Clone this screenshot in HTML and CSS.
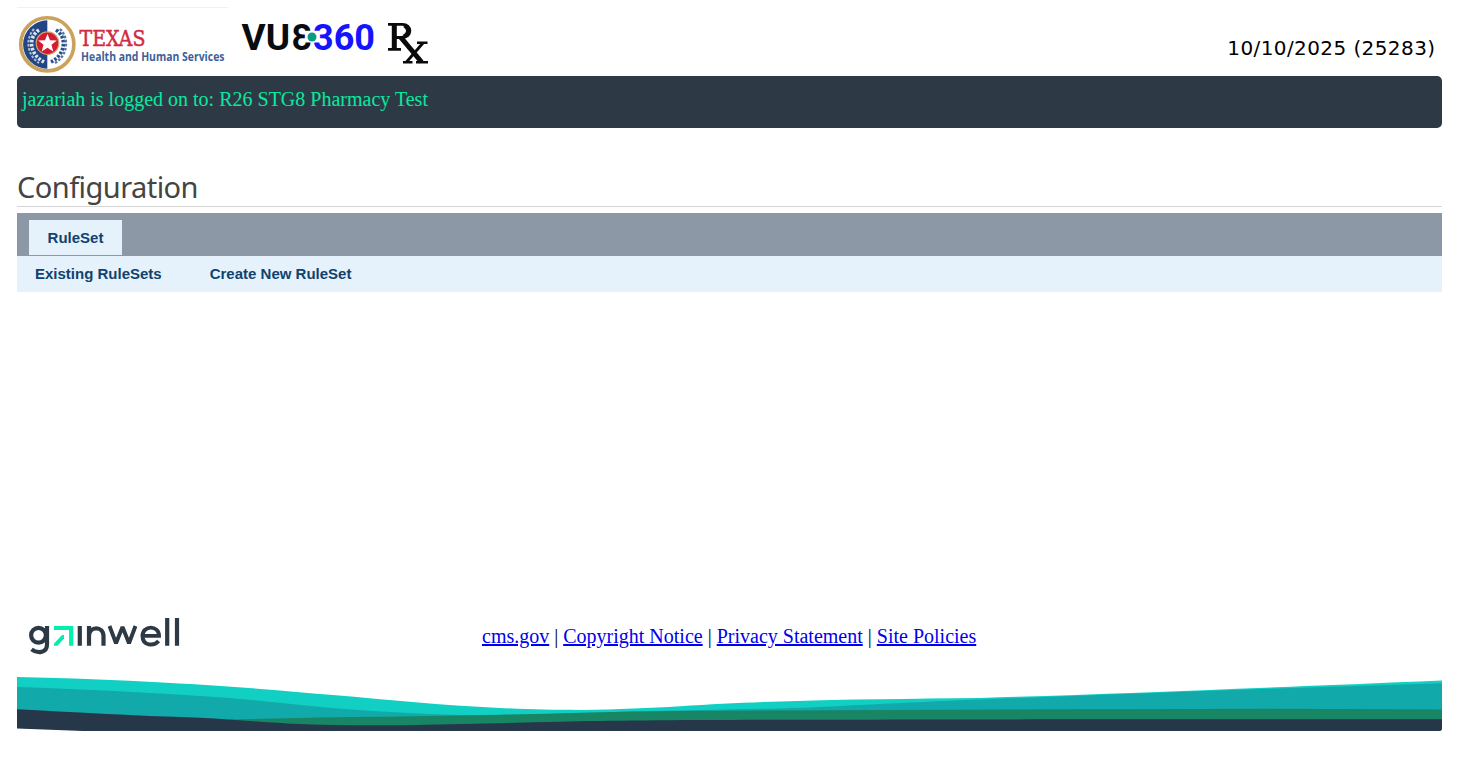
FILE: index.html
```html
<!DOCTYPE html>
<html lang="en">
<head>
<meta charset="utf-8">
<title>Configuration</title>
<link rel="stylesheet" href="styles.css">
</head>
<body>
<div class="page">
  <header class="masthead">
    <svg class="brand" width="420" height="69" viewBox="17 7 420 69">
      <path d="M17 7.5H228" stroke="#f1f1f1"/>
      <circle cx="47.3" cy="44.3" r="26.6" fill="#fff" stroke="#cba25c" stroke-width="3.6"/>
      <path d="M47.3 20.3a24.2 24.2 0 1 0 0 48.4z" fill="#214585"/>
      <g fill="none" stroke-width="3.6" stroke-dasharray="2.6 1.5">
        <path d="M39 30C28 37 29 54 44 62" stroke="#dce4ee"/>
        <path d="M34 29C25 39 27 55 39 63" stroke="#aebfd7" stroke-width="2"/>
        <path d="M56 30C67 37 66 54 51 62" stroke="#28508e"/>
        <path d="M60 29C70 39 67 56 55 63" stroke="#57759f" stroke-width="2.4"/>
      </g>
      <circle cx="47.5" cy="43.2" r="11.3" fill="#d31b35" stroke="#cfa36b" stroke-width="1.2"/>
      <path d="M47.5 34l2.5 6.2 6.8.3-5.3 4.3 1.8 6.6-5.8-3.7-5.8 3.7 1.8-6.6-5.3-4.3 6.8-.3z" fill="#fff"/>
      <text class="texas" x="79.5" y="46" textLength="66" lengthAdjust="spacingAndGlyphs">TEXAS</text>
      <text class="services" x="81" y="61.3" textLength="143.5" lengthAdjust="spacingAndGlyphs">Health and Human Services</text>
      <text class="vue" x="241.5" y="50" textLength="48.5" lengthAdjust="spacingAndGlyphs">VU</text>
      <text class="vue" transform="translate(311.5 50) scale(-1 1)" x="0" y="0" textLength="20" lengthAdjust="spacingAndGlyphs">3</text>
      <text class="vue blue" x="313" y="50" textLength="62" lengthAdjust="spacingAndGlyphs">360</text>
      <circle cx="312" cy="37" r="5.3" fill="#fff"/>
      <circle cx="312" cy="37" r="4.5" fill="#089c83"/>
      <g fill="none" stroke="#0b0b0b">
        <path d="M388 24.4H402C412.5 24 412.5 37.5 402 37.5H394M388 49.3H401" stroke-width="2.8"/>
        <path d="M394.3 24V50" stroke-width="5"/>
        <path d="M404.5 25.5Q412 31 404 36.7" stroke-width="4"/>
        <path d="M400.5 37L421.5 62" stroke-width="5"/>
        <path d="M423 43L406.5 62" stroke-width="2.8"/>
        <path d="M417 42.7H427.5M403 62.2H412.5M416 62.2H428" stroke-width="2.4"/>
      </g>
    </svg>
    <div class="date">10/10/2025 (25283)</div>
  </header>
  <div class="login-bar">jazariah is logged on to: R26 STG8 Pharmacy Test</div>
  <h1 class="title">Configuration</h1>
  <nav class="tabs"><a class="tab">RuleSet</a></nav>
  <nav class="subnav"><a>Existing RuleSets</a><a>Create New RuleSet</a></nav>
  <footer class="footer">
    <div class="footer-row">
      <svg class="gainwell" width="152" height="40" viewBox="28 616 152 40" fill="none" stroke="#2d3a46" stroke-width="4.2">
        <circle cx="38.5" cy="635.2" r="7.4"/>
        <path d="M47 626V644.5C47 653.5 37 653.5 31.5 649.3M79.8 626V645.8M89 645.8V626M89 636C89 625.7 103.5 625.7 103.5 636V645.8"/>
        <path d="M109.5 626L116 643.3L122.5 627L129 643.3L135.5 626" stroke-width="3.9" stroke-linejoin="bevel"/>
        <path d="M142 635.9H159C159 624.7 142.5 625 142.5 636C142.5 646 154 646.5 158.6 641" stroke-width="3.9"/>
        <path d="M167.2 618V645.8M177 618V645.8"/>
        <path d="M54 628H71.2V645.8" stroke="#00eeae"/>
        <path d="M54 643.5L62 635H64V638.5L57.5 645.8H54Z" fill="#00eeae" stroke="none"/>
      </svg>
      <div class="links"><a href="#">cms.gov</a> | <a href="#">Copyright Notice</a> | <a href="#">Privacy Statement</a> | <a href="#">Site Policies</a></div>
    </div>
    <svg class="wave" width="1425" height="55" viewBox="17 676 1425 55">
      <path fill="#11d0c3" d="M17 677C70 678 115 680 167 682.7C230 686 280 690.5 333 695C390 700 440 705 500 708C530 709.4 550 710 580 710C620 709.5 650 708 680 706.3C715 704 745 702.5 780 701.5C850 699 910 699 980 698C1110 694 1261 688 1442 680.5V725H17Z"/>
      <path fill="#12a9aa" d="M17 687C80 689 140 692 200 696C250 699 290 704 333 708C380 712 430 714.5 467 715H540C620 711 680 710.5 780 708.5C840 706.5 900 702.5 980 699.5C1060 696.5 1160 692.5 1261 689L1442 683.3V725H17Z"/>
      <path fill="#188665" d="M230 719.5C330 717 420 716.5 500 714.8C580 713 630 711.3 680 711C870 710 1060 709.5 1261 708.8L1442 709.5V731H230Z"/>
      <path fill="#253749" d="M17 709.2C70 712 130 715.5 200 717.7C245 720 280 724.5 333 725C410 726 480 723.5 560 721.7C680 719.3 880 719.5 1442 719.3V731H83L17 728.5Z"/>
    </svg>
  </footer>
</div>
</body>
</html>
```
FILE: styles.css
```css
body { margin: 0; background: #fff; font-family: "Liberation Serif", serif; }
.page { display: flex; flex-direction: column; margin: 7px 19px 0 17px; width: 1425px; }
.masthead { display: flex; justify-content: space-between; height: 69px; }
.brand { display: block; }
.texas { font: 400 21.5px "DejaVu Serif", serif; fill: #d22a40; stroke: #d22a40; stroke-width: .5px; }
.services { font: 700 13px "Open Sans", sans-serif; fill: #3f5f9a; }
.vue { font: 700 37.5px Roboto, sans-serif; fill: #080c0d; }
.blue { fill: #1414ff; }
.date { padding: 28px 6.5px 0 0; font: 20px/26px "DejaVu Sans", sans-serif; letter-spacing: .41px; color: #000; }
.login-bar { box-sizing: border-box; height: 52px; padding: 12px 5px; border-radius: 5px; background: #2d3a46; color: #0ae8a0; font-size: 20px; line-height: 23px; }
.title { box-sizing: border-box; height: 39px; margin: 40px 0 6px; border-bottom: 1px solid #d5d5d5; color: #444; font: 400 29px/37px "Noto Sans", sans-serif; letter-spacing: -.55px; }
.tabs { display: flex; align-items: flex-start; box-sizing: border-box; height: 43px; padding: 7px 12px 0; background: #8d98a6; }
.tab { box-sizing: border-box; width: 93px; height: 35px; background: #e5f2fc; text-align: center; line-height: 36px; }
.tabs, .subnav { color: #11426e; font-family: "Liberation Sans", Arial, sans-serif; font-size: 15px; font-weight: 700; }
.subnav { display: flex; gap: 48px; height: 36px; padding-left: 18px; background: #e5f2fc; line-height: 36px; width: 1407px; }
.footer { margin-top: 324px; }
.footer-row { display: flex; height: 60px; padding-left: 11px; }
.gainwell { display: block; }
.links { margin-left: 302px; padding-top: 9px; font-size: 20px; line-height: 23px; white-space: pre; }
.links a { color: #0000ee; }
.wave { display: block; border-bottom-right-radius: 3px; }
```
